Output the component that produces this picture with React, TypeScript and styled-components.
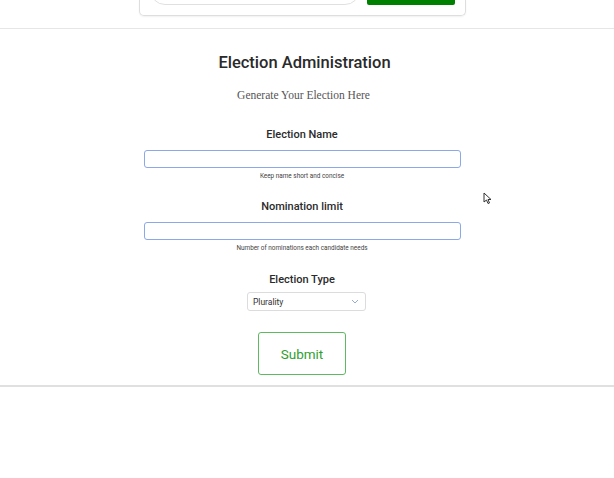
import React from 'react';
import styled, { createGlobalStyle } from 'styled-components';

const GlobalStyle = createGlobalStyle`
    body {
        margin: 0;
        background: #fff;
        font-family: Roboto, "Liberation Sans", sans-serif;
    }
`;

const Page = styled.div`
    position: relative;
    width: 614px;
    height: 478px;
    overflow: hidden;
`;

const TopBar = styled.header`
    height: 28px;
    border-bottom: 1px solid #e6e6e6;
    display: flex;
    justify-content: center;
    padding-right: 9px;
`;

const NavCard = styled.div`
    width: 327px;
    height: 16px;
    box-sizing: border-box;
    border: 1px solid #dedede;
    border-top: none;
    border-radius: 0 0 5px 5px;
    box-shadow: 0 1px 2px rgba(0, 0, 0, 0.06);
    display: flex;
    align-items: flex-end;
    gap: 7px;
    padding: 0 11px 10px 10px;
    overflow: hidden;
`;

const SearchPill = styled.div`
    width: 210px;
    height: 30px;
    flex-shrink: 0;
    box-sizing: border-box;
    border: 1px solid #e0e0e0;
    border-radius: 15px;
`;

const SearchButton = styled.div`
    width: 88px;
    height: 30px;
    flex-shrink: 0;
    background: #008000;
    border-radius: 2px;
`;

const Main = styled.main`
    display: flex;
    flex-direction: column;
    align-items: center;
    padding: 22px 10px 10px 0;
    border-bottom: 2px solid #e0e0e0;
`;

const Title = styled.h1`
    margin: 0;
    font-size: 16.5px;
    font-weight: 500;
    color: #2a2a2a;
    line-height: 24px;
    margin-left: 5px;
`;

const Subtitle = styled.p`
    margin: 13px 0 0 3px;
    font-family: "Liberation Serif", "DejaVu Serif", serif;
    font-size: 11.5px;
    color: #555;
    line-height: 14px;
`;

const Field = styled.div<{ $top: number }>`
    display: flex;
    flex-direction: column;
    align-items: center;
    margin-top: ${(p) => p.$top}px;
`;

const Label = styled.label`
    font-size: 11px;
    font-weight: 500;
    color: #2b2b2b;
    line-height: 14px;
`;

const TextInput = styled.div`
    width: 317px;
    height: 18px;
    box-sizing: border-box;
    margin-top: 8px;
    margin-left: 1px;
    border: 1px solid #8ca8e6;
    border-radius: 3px;
`;

const Help = styled.small`
    margin-top: 4px;
    font-size: 6.4px;
    color: #444;
    line-height: 9px;
`;

const Select = styled.div`
    width: 119px;
    height: 19px;
    box-sizing: border-box;
    margin-top: 5px;
    margin-left: 9px;
    border: 1px solid #dcdcdc;
    border-radius: 3px;
    display: flex;
    align-items: center;
    justify-content: space-between;
    padding: 0 6px 0 5px;
    font-size: 8.5px;
    color: #333;
`;

const SubmitButton = styled.button`
    margin-top: 21px;
    width: 88px;
    height: 43px;
    flex-shrink: 0;
    background: #fff;
    border: 1px solid #5fba5f;
    border-radius: 3px;
    color: #2f9e2f;
    font-family: Roboto, "Liberation Sans", sans-serif;
    font-size: 13.5px;
    cursor: pointer;
`;

const Cursor = styled.svg`
    position: absolute;
    left: 483px;
    top: 192px;
`;

const App = () => {
    return (
        <Page>
            <GlobalStyle />
            <TopBar>
                <NavCard>
                    <SearchPill />
                    <SearchButton />
                </NavCard>
            </TopBar>
            <Main>
                <Title>Election Administration</Title>
                <Subtitle>Generate Your Election Here</Subtitle>
                <Field $top={26}>
                    <Label>Election Name</Label>
                    <TextInput />
                    <Help>Keep name short and concise</Help>
                </Field>
                <Field $top={19}>
                    <Label>Nomination limit</Label>
                    <TextInput />
                    <Help>Number of nominations each candidate needs</Help>
                </Field>
                <Field $top={20}>
                    <Label>Election Type</Label>
                    <Select>
                        <span>Plurality</span>
                        <svg width="8" height="5" viewBox="0 0 8 5">
                            <path d="M1 1 L4 4 L7 1" fill="none" stroke="#9aaccc" strokeWidth="1" />
                        </svg>
                    </Select>
                </Field>
                <SubmitButton>Submit</SubmitButton>
            </Main>
            <Cursor width="9" height="13" viewBox="0 0 9 13">
                <path d="M1 1 L1 10 L3.5 8 L5 11.5 L6.5 11 L5 7.5 L8 7.5 Z" fill="#fff" stroke="#333" strokeWidth="1" />
            </Cursor>
        </Page>
    );
};

export default App;
